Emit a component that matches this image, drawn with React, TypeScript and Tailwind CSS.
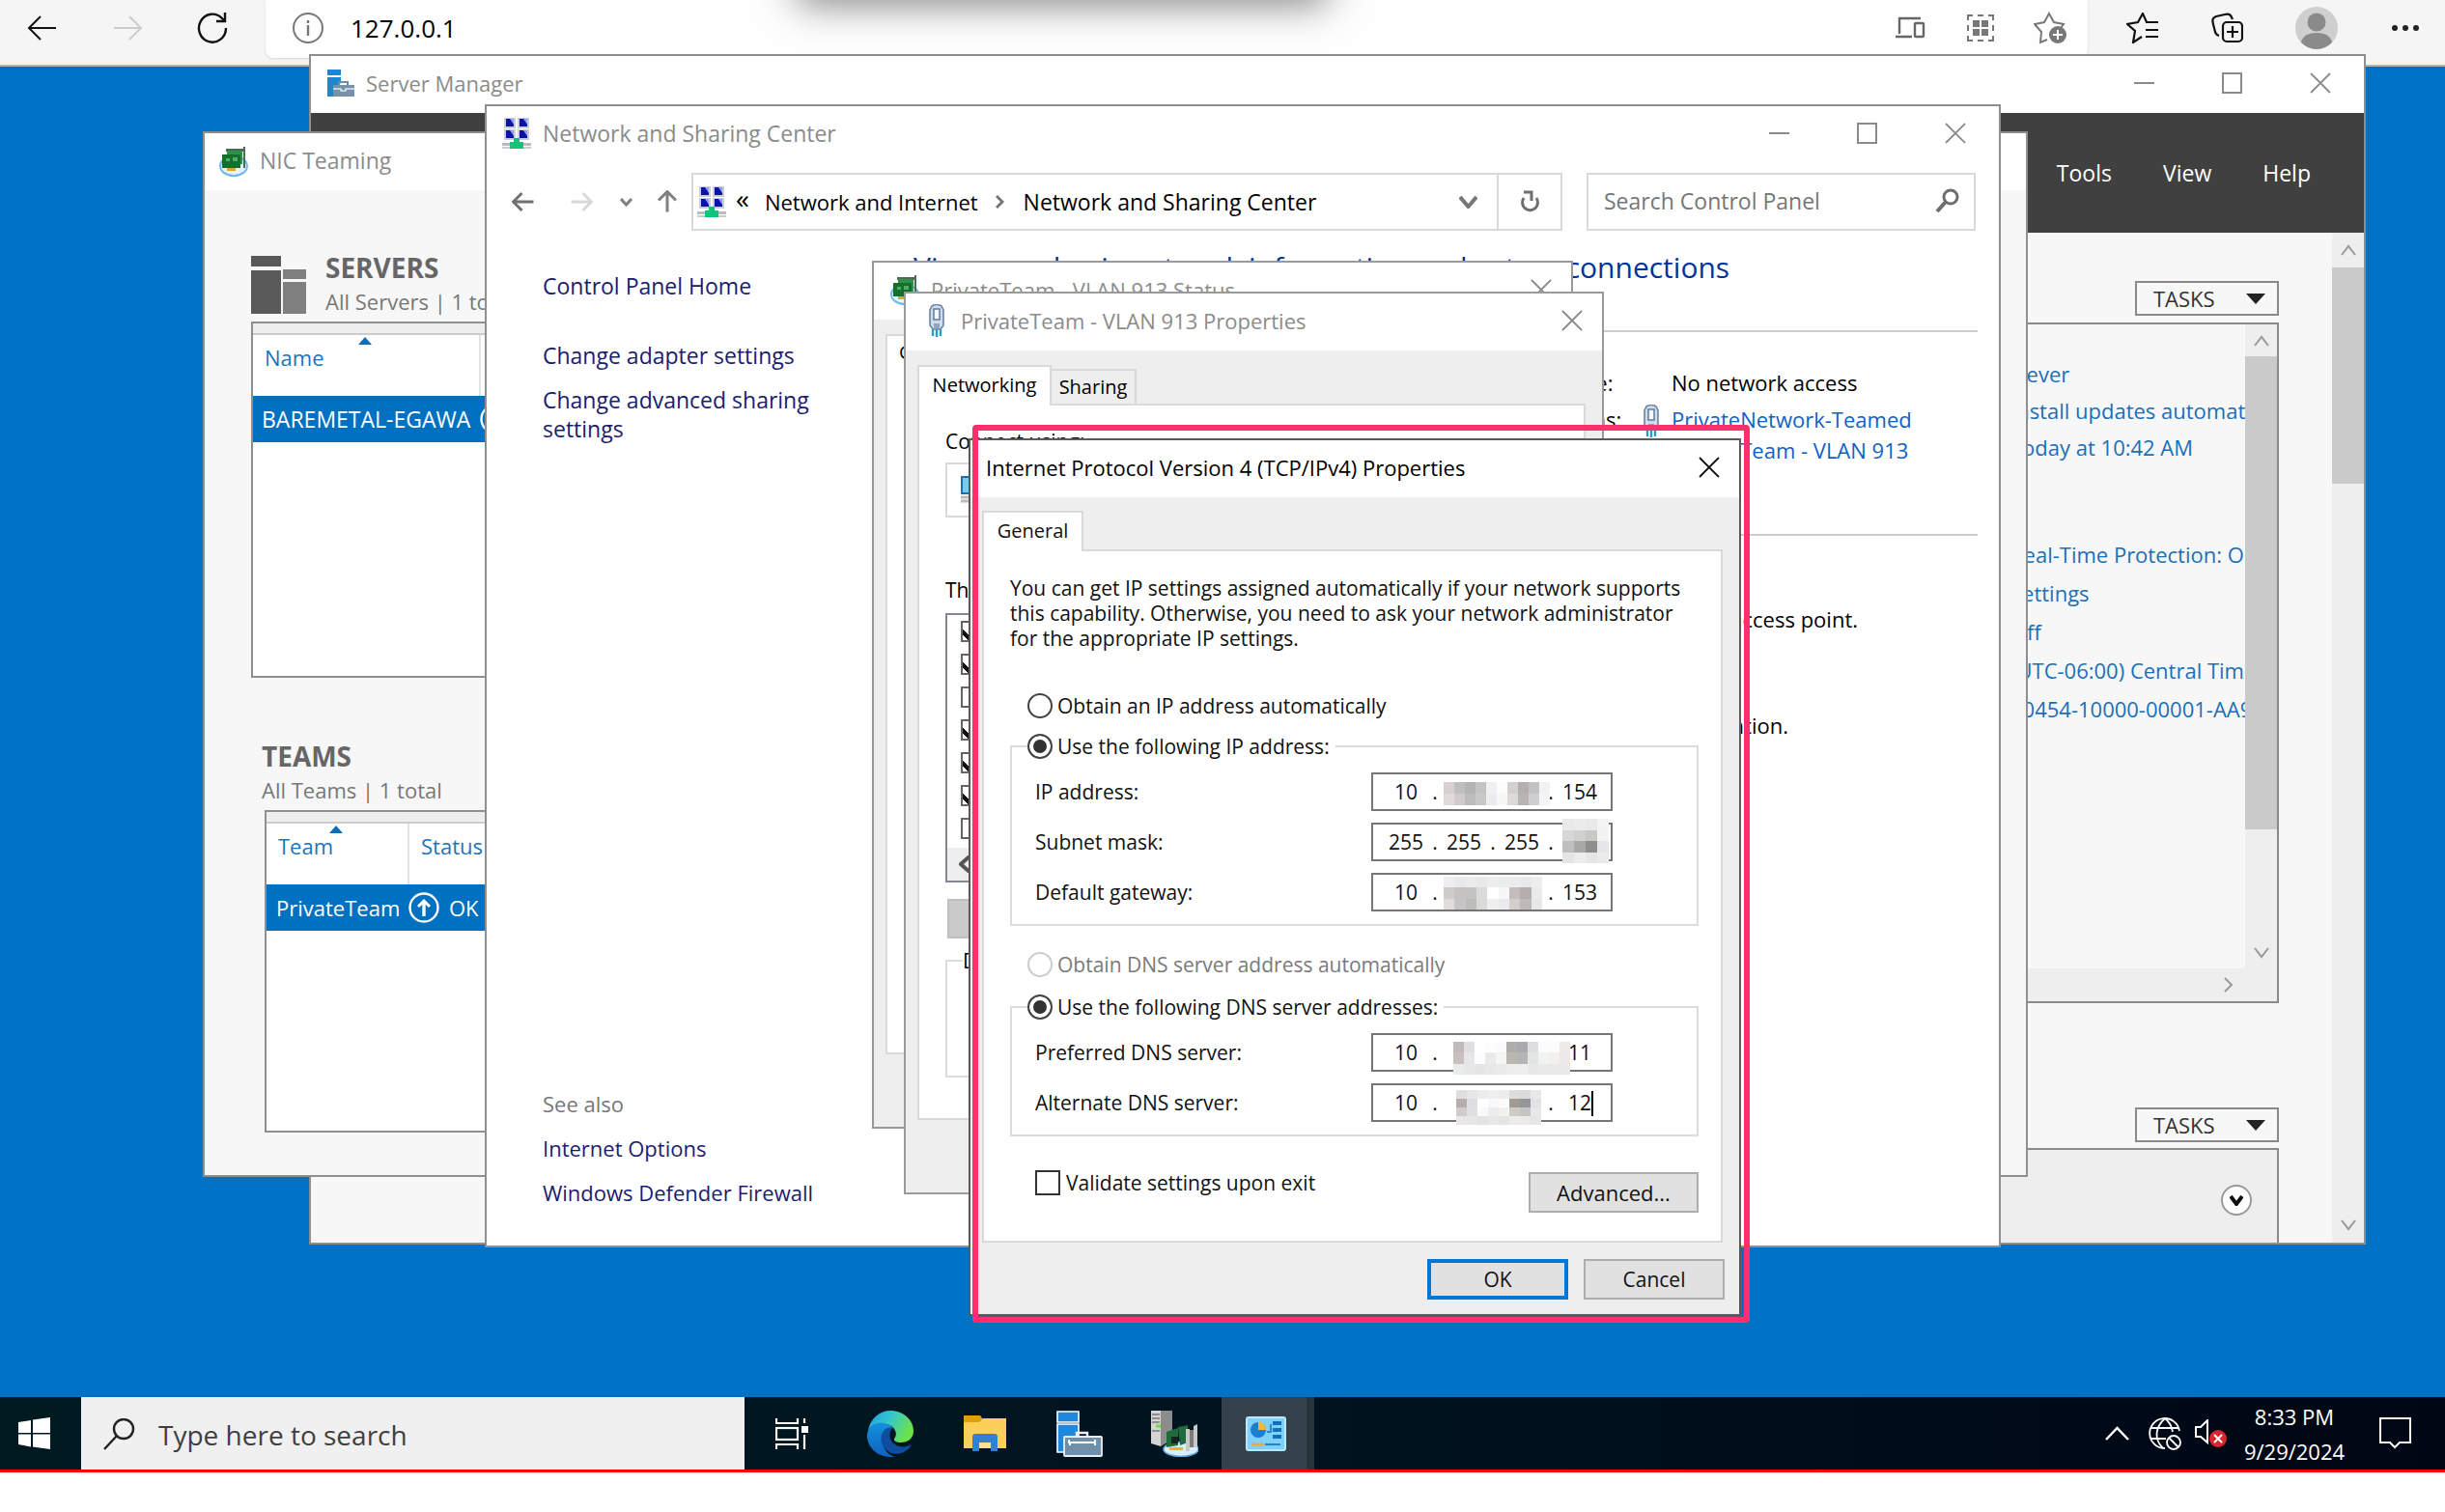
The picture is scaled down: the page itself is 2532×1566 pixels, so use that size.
import React from "react";

const sans = "font-['Open_Sans','Noto_Sans',sans-serif]";

/* ---------- icons ---------- */

function Arrow({ dir, size, stroke, color }: { dir: "left" | "right" | "up"; size: number; stroke: number; color: string }) {
  const d = {
    left: "M30 16H3M14 4L2 16l12 12",
    right: "M2 16h27M18 4l12 12-12 12",
    up: "M16 30V3M4 14L16 2l12 12",
  }[dir];
  return (
    <svg width={size} height={size} viewBox="0 0 32 32" fill="none" stroke={color} strokeWidth={stroke}>
      <path d={d} />
    </svg>
  );
}

function Chevron({ dir, w, h, stroke = 2, color = "#999" }: { dir: "up" | "down" | "left" | "right"; w: number; h: number; stroke?: number; color?: string }) {
  const d = {
    up: `M1 ${h - 1}L${w / 2} 2L${w - 1} ${h - 1}`,
    down: `M1 1L${w / 2} ${h - 2}L${w - 1} 1`,
    left: `M${w - 1} 1L2 ${h / 2}L${w - 1} ${h - 1}`,
    right: `M1 1L${w - 2} ${h / 2}L1 ${h - 1}`,
  }[dir];
  return (
    <svg width={w} height={h} viewBox={`0 0 ${w} ${h}`} fill="none" stroke={color} strokeWidth={stroke}>
      <path d={d} />
    </svg>
  );
}

function Cross({ color }: { color: string }) {
  return (
    <svg width="22" height="22" viewBox="0 0 22 22" stroke={color} strokeWidth="1.8">
      <path d="M1 1l20 20M21 1L1 21" />
    </svg>
  );
}

function NetworkIcon() {
  const screen = (x: number, y: number) => (
    <g key={`${x}-${y}`}>
      <rect x={x} y={y} width="12" height="11" fill="#c9cdd6" />
      <rect x={x + 2} y={y + 1} width="8" height="8" fill="#0c12a8" />
      <path d={`M${x + 6} ${y + 1}h4v6z`} fill="#8fa0ee" />
    </g>
  );
  return (
    <svg width="30" height="34" viewBox="0 0 30 34" className="shrink-0">
      {screen(2, 1)}
      {screen(16, 1)}
      {screen(2, 13)}
      {screen(16, 13)}
      <rect y="27" width="30" height="3" fill="#b8bcc0" />
      <rect y="31" width="30" height="2" fill="#c9ccd0" />
      <path d="M12 22h6v4h4v7H8v-7h4z" fill="#12c47a" />
    </svg>
  );
}

function NicIcon() {
  return (
    <svg width="32" height="32" viewBox="0 0 32 32" className="shrink-0">
      <ellipse cx="16" cy="21" rx="14" ry="10" fill="#e4f3fd" stroke="#6db9ea" strokeWidth="2" />
      <path d="M8 3h20v3H8zM26 1h2v22h-2z" fill="#4c6a58" />
      <path d="M9 5h16v14H9z" fill="#2d9147" />
      <path d="M4 9h19v14H4z" fill="#12702c" />
      <path d="M8 13h4v3H8zM15 12h5v4h-5z" fill="#4fae61" />
      <path d="M9 23h9v3H9z" fill="#e0a91c" />
    </svg>
  );
}

function PlugIcon() {
  return (
    <svg width="18" height="34" viewBox="0 0 18 34" className="shrink-0">
      <path d="M4 2q5-3 10 0l2 4v16l-3 4H5l-3-4V6z" fill="#cfdcec" stroke="#6c84a4" strokeWidth="1.6" />
      <rect x="6" y="5" width="6" height="11" fill="#f3f8fd" stroke="#5a7496" strokeWidth="1.4" />
      <path d="M6 20h6v5H6z" fill="#8ea6c2" />
      <path d="M5 26v7M9 26v8M13 26v7" stroke="#2b9cc4" strokeWidth="2.4" />
    </svg>
  );
}

function ServerManagerIcon() {
  return (
    <svg width="29" height="29" viewBox="0 0 29 29" className="shrink-0">
      <path d="M1 0h14v6H1zM1 8h14v6l-7 5v9H1z" fill="#1d86d2" />
      <path d="M13 16v-3h9v3" fill="none" stroke="#6f8ba3" strokeWidth="2" />
      <path d="M7 16h22v12H7z" fill="#7592aa" />
      <path d="M7 20h8v2h5v-2h9" fill="none" stroke="#dfe8ef" strokeWidth="1.4" />
    </svg>
  );
}

function UpCircle() {
  return (
    <svg width="32" height="32" viewBox="0 0 32 32" fill="none" stroke="#fff" className="shrink-0">
      <circle cx="16" cy="16" r="14.5" strokeWidth="2.4" />
      <path d="M16 25V9" strokeWidth="3.4" />
      <path d="M10 15l6-6 6 6" strokeWidth="3" />
    </svg>
  );
}

/* ---------- window pieces ---------- */

function WindowButtons({ only = false, color = "#8b8b8b" }: { only?: boolean; color?: string }) {
  return (
    <div className="ml-auto flex h-full">
      {!only && (
        <>
          <button aria-label="Minimize" className="flex w-[91px] items-center justify-center">
            <svg width="21" height="22" stroke={color} strokeWidth="2"><path d="M0 11h21" /></svg>
          </button>
          <button aria-label="Maximize" className="flex w-[91px] items-center justify-center">
            <svg width="21" height="22" fill="none" stroke={color} strokeWidth="2"><rect x="1" y="1" width="19" height="20" /></svg>
          </button>
        </>
      )}
      <button aria-label="Close" className={only ? "flex w-[62px] items-center justify-center" : "flex w-[91px] items-center justify-center"}>
        <Cross color={color} />
      </button>
    </div>
  );
}

function TasksButton({ className }: { className: string }) {
  return (
    <button className={`flex h-9 w-[149px] shrink-0 items-center self-end border-2 border-[#8a8a8a] pr-3 pl-[17px] text-[22px] leading-8 text-[#333] ${className}`}>
      TASKS
      <svg width="20" height="11" viewBox="0 0 20 11" className="ml-auto"><path d="M0 0h20L10 11z" fill="#222" /></svg>
    </button>
  );
}

function ServerManager() {
  const first = ["Never", "Install updates automatically", "Today at 10:42 AM"];
  const second = ["Real-Time Protection: On", "Settings", "Off", "(UTC-06:00) Central Time", "00454-10000-00001-AA989"];
  const link = "block overflow-hidden text-[22px] leading-[30px] whitespace-nowrap text-[#1b6fb8]";
  return (
    <section aria-label="Server Manager" className="absolute top-[56px] left-[320px] flex h-[1233px] w-[2130px] flex-col border-2 border-[#8f8f8f] bg-[#f7f7f7]">
      <div className="flex h-[59px] shrink-0 items-center gap-3 bg-white pb-[3px] pl-4 text-[22px] text-[#8b8b8b]">
        <ServerManagerIcon />
        <span>Server Manager</span>
        <WindowButtons />
      </div>
      <nav className="flex h-[124px] shrink-0 items-center justify-end gap-[53px] bg-[#404040] pr-[55px] text-[23px] text-white">
        <button>Tools</button>
        <button>View</button>
        <button>Help</button>
      </nav>
      <div className="flex min-h-0 flex-1">
        <div className="flex min-w-0 flex-1 flex-col pr-[55px] pl-[200px]">
          <TasksButton className="mt-[50px]" />
          <div className="mt-[7px] flex h-[705px] shrink-0 flex-col border-2 border-[#8a8a8a]">
            <div className="flex min-h-0 flex-1">
              <div className="ml-auto w-[243px] pt-9">
                <div className="flex flex-col gap-2">
                  {first.map((t) => <a key={t} href="#" className={link}>{t}</a>)}
                </div>
                <div className="mt-[81px] flex flex-col gap-[10px]">
                  {second.map((t) => <a key={t} href="#" className={link}>{t}</a>)}
                </div>
              </div>
              <div className="flex w-[33px] flex-col items-center bg-[#eee]">
                <div className="flex h-[33px] items-center"><Chevron dir="up" w={16} h={12} /></div>
                <div className="h-[490px] w-full bg-[#cacaca]" />
                <div className="mt-auto flex h-[33px] items-center"><Chevron dir="down" w={16} h={12} /></div>
              </div>
            </div>
            <div className="flex h-[34px] items-center justify-end bg-[#eee] pr-[45px]"><Chevron dir="right" w={10} h={16} /></div>
          </div>
          <TasksButton className="mt-[108px]" />
          <div className="mt-[6px] flex flex-1 items-center justify-end border-2 border-b-0 border-[#8a8a8a] bg-[#eee] pt-2 pr-[26px]">
            <button aria-label="Expand" className="flex h-8 w-8 items-center justify-center rounded-full border-2 border-[#999] bg-white">
              <Chevron dir="down" w={14} h={11} stroke={4} color="#111" />
            </button>
          </div>
        </div>
        <div className="flex w-[33px] shrink-0 flex-col items-center bg-[#eee]">
          <div className="flex h-9 items-center"><Chevron dir="up" w={16} h={12} /></div>
          <div className="h-[224px] w-full bg-[#cacaca]" />
          <div className="mt-auto flex h-9 items-center"><Chevron dir="down" w={16} h={12} /></div>
        </div>
      </div>
    </section>
  );
}

function SortMark({ className }: { className: string }) {
  return <svg width="14" height="8" viewBox="0 0 14 8" className={`absolute top-[2px] ${className}`}><path d="M0 8L7 0l7 8z" fill="#0f6cb6" /></svg>;
}

function NicTeaming() {
  const th = "relative h-[63px] border-r-2 border-[#e2e2e2] pb-4 text-left align-middle text-[22px] font-normal text-[#1b75bc]";
  return (
    <section aria-label="NIC Teaming" className="absolute top-[136px] left-[210px] flex h-[1083px] w-[1890px] flex-col border-2 border-[#8f8f8f] bg-[#f7f7f7]">
      <div className="flex h-[59px] shrink-0 items-center gap-[11px] bg-white pb-[2px] pl-[14px] text-[23px] text-[#8b8b8b]">
        <NicIcon />
        <span>NIC Teaming</span>
      </div>
      <div className="flex flex-col pl-12">
        <div className="mt-16 flex h-[72px] gap-5">
          <svg width="57" height="60" viewBox="0 0 57 60" className="mt-1">
            <path d="M0 0h31v11H0zM0 15h31v45H0z" fill="#595959" />
            <path d="M33 14h24v10H33zM33 27h24v33H33z" fill="#808080" />
          </svg>
          <div>
            <h2 className="text-[28px] leading-8 font-bold text-[#666]">SERVERS</h2>
            <p className="mt-1 text-[22px] leading-[30px] text-[#777]">All Servers | 1 total</p>
          </div>
        </div>
        <div className="h-[369px] w-[900px] border-2 border-[#8f8f8f] bg-white">
          <div className="h-3 border-b-2 border-[#ccc] bg-[#eee]" />
          <table className="w-full table-fixed border-collapse">
            <thead>
              <tr>
                <th className={`${th} w-[235px] pl-3`}>
                  <SortMark className="left-[109px]" />
                  Name
                </th>
                <th className={`${th} pl-3`}>Status</th>
              </tr>
            </thead>
            <tbody>
              <tr className="h-12 bg-[#0070c0] text-[23px] text-white">
                <td className="pl-[9px] whitespace-nowrap">BAREMETAL-EGAWA</td>
                <td><UpCircle /></td>
              </tr>
            </tbody>
          </table>
        </div>
        <h2 className="mt-[65px] pl-[11px] text-[28px] leading-8 font-bold text-[#666]">TEAMS</h2>
        <p className="mt-1 pl-[11px] text-[22px] leading-[30px] text-[#777]">All Teams | 1 total</p>
        <div className="mt-[6px] ml-[14px] h-[334px] w-[900px] border-2 border-[#8f8f8f] bg-white">
          <div className="h-3 border-b-2 border-[#ccc] bg-[#eee]" />
          <table className="w-full table-fixed border-collapse">
            <thead>
              <tr>
                <th className={`${th} w-[147px] pl-3`}>
                  <SortMark className="left-[65px]" />
                  Team
                </th>
                <th className={`${th} pl-3`}>Status</th>
              </tr>
            </thead>
            <tbody>
              <tr className="h-12 bg-[#0070c0] text-[22px] text-white">
                <td className="pl-[10px] whitespace-nowrap">PrivateTeam</td>
                <td>
                  <div className="flex items-center gap-[10px]"><UpCircle />OK</div>
                </td>
              </tr>
            </tbody>
          </table>
        </div>
      </div>
    </section>
  );
}

function NetworkCenter() {
  const side = "block leading-[30px] text-[#1c1c6e]";
  return (
    <section aria-label="Network and Sharing Center" className="absolute top-[108px] left-[502px] flex h-[1184px] w-[1570px] flex-col border-2 border-[#8f8f8f] bg-white text-[22px]">
      <div className="flex h-[59px] shrink-0 items-center gap-3 pb-[3px] pl-4 text-[23px] text-[#8b8b8b]">
        <NetworkIcon />
        <span>Network and Sharing Center</span>
        <WindowButtons />
      </div>
      <div className="mt-[10px] flex h-[60px] shrink-0 items-center pr-6 pl-[26px]">
        <button aria-label="Back"><Arrow dir="left" size={24} stroke={4} color="#707070" /></button>
        <button aria-label="Forward" className="ml-9"><Arrow dir="right" size={24} stroke={4} color="#d8d8d8" /></button>
        <button aria-label="Recent locations" className="ml-7"><Chevron dir="down" w={13} h={9} stroke={3} color="#808080" /></button>
        <button aria-label="Up" className="ml-6"><Arrow dir="up" size={24} stroke={4} color="#808080" /></button>
        <div className="ml-[13px] flex h-full flex-1 items-center border-2 border-[#d9d9d9] pl-1">
          <NetworkIcon />
          <span className="-mt-2 ml-[10px] text-[28px] leading-8">«</span>
          <button className="ml-4">Network and Internet</button>
          <span className="ml-[18px]"><Chevron dir="right" w={9} h={14} stroke={3} color="#777" /></span>
          <button className="ml-[20px] text-[23px]">Network and Sharing Center</button>
          <button aria-label="Previous locations" className="mr-5 ml-auto"><Chevron dir="down" w={19} h={13} stroke={4} color="#777" /></button>
          <button aria-label="Refresh" className="flex h-full w-[66px] items-center justify-center border-l-2 border-[#d9d9d9]">
            <svg width="22" height="24" viewBox="0 0 22 24" fill="none" stroke="#6e6e6e" strokeWidth="3">
              <path d="M18 8a8 8 0 1 1-13 0" />
              <path d="M5 2h8v9" />
            </svg>
          </button>
        </div>
        <div className="ml-[25px] flex h-full w-[403px] items-center border-2 border-[#d9d9d9] pr-[14px] pb-[2px] pl-4">
          <input aria-label="Search Control Panel" placeholder="Search Control Panel" className="min-w-0 flex-1 text-[23px] outline-none placeholder:text-[#767676]" />
          <svg width="26" height="26" viewBox="0 0 26 26" fill="none" stroke="#6e6e6e" strokeWidth="3">
            <circle cx="16" cy="9" r="7" />
            <path d="M11 14L2 24" strokeWidth="4" />
          </svg>
        </div>
      </div>
      <div className="flex min-h-0 flex-1">
        <nav className="flex w-[442px] shrink-0 flex-col pt-[42px] pb-10 pl-[58px]">
          <div className="text-[23px]">
            <a href="#" className={side}>Control Panel Home</a>
            <a href="#" className={`${side} mt-[42px]`}>Change adapter settings</a>
            <a href="#" className={`${side} mt-4`}>Change advanced sharing<br />settings</a>
          </div>
          <p className="mt-auto leading-[30px] text-[#777]">See also</p>
          <a href="#" className={`${side} mt-4`}>Internet Options</a>
          <a href="#" className={`${side} mt-4`}>Windows Defender Firewall</a>
        </nav>
        <div className="flex min-w-0 flex-1 flex-col pr-[22px] text-black">
          <h1 className="mt-[20px] text-[30px] leading-9 whitespace-nowrap text-[#003399]">View your basic network information and set up connections</h1>
          <hr className="mt-[47px] border-t-2 border-[#ccc]" />
          <dl className="mt-[37px] ml-[600px] grid grid-cols-[155px_1fr] leading-[30px] whitespace-nowrap">
            <dt>Access type:</dt>
            <dd className="pl-[30px]">No network access</dd>
            <dt className="mt-2">Connections:</dt>
            <dd className="mt-2 flex">
              <span className="w-[30px]"><PlugIcon /></span>
              <span className="flex flex-col text-[#0f62c4]">
                <a href="#" className="leading-[30px]">PrivateNetwork-Teamed</a>
                <a href="#" className="mt-[2px] leading-[30px]">PrivateTeam - VLAN 913</a>
              </span>
            </dd>
          </dl>
          <hr className="mt-[72px] border-t-2 border-[#ccc]" />
          <p className="mt-[71px] w-[978px] text-right leading-[30px] whitespace-nowrap">Set up a broadband, dial-up, or VPN connection; or set up a router or access point.</p>
          <p className="mt-20 w-[906px] text-right leading-[30px] whitespace-nowrap">Diagnose and repair network problems, or get troubleshooting information.</p>
        </div>
      </div>
    </section>
  );
}

function StatusWindow() {
  return (
    <section aria-label="PrivateTeam - VLAN 913 Status" className="absolute top-[270px] left-[903px] flex h-[899px] w-[726px] flex-col border-2 border-[#9a9a9a] bg-[#eee] text-[22px]">
      <div className="flex h-[59px] shrink-0 items-center gap-[11px] bg-white pb-[3px] pl-4 text-[#8b8b8b]">
        <NicIcon />
        <span>PrivateTeam - VLAN 913 Status</span>
        <WindowButtons only />
      </div>
      <div className="mt-[15px] mr-4 ml-3 h-[746px] border-2 border-[#d9d9d9] bg-white pt-1 pl-3 text-[20px] leading-[26px]">General</div>
    </section>
  );
}

function PropertiesWindow() {
  const items = [
    { name: "Client for Microsoft Networks", on: true },
    { name: "File and Printer Sharing for Microsoft Networks", on: true },
    { name: "Multiplexor Protocol", on: false },
    { name: "QoS Packet Scheduler", on: true },
    { name: "Internet Protocol Version 4", on: true },
    { name: "LLDP Protocol Driver", on: true },
    { name: "Internet Protocol Version 6", on: false },
  ];
  return (
    <section aria-label="PrivateTeam - VLAN 913 Properties" className="absolute top-[302px] left-[936px] flex h-[935px] w-[725px] flex-col border-2 border-[#9a9a9a] bg-[#eee] text-[21px] leading-[26px]">
      <div className="flex h-[59px] shrink-0 items-center gap-4 bg-white pb-[3px] pl-[23px] text-[22px] text-[#8b8b8b]">
        <PlugIcon />
        <span>PrivateTeam - VLAN 913 Properties</span>
        <WindowButtons only />
      </div>
      <div className="flex flex-1 flex-col pt-[13px] pr-[17px] pb-[75px] pl-3">
        <div role="tablist" className="flex h-[42px] items-end">
          <button role="tab" aria-selected="true" className="relative z-10 -mb-[2px] h-[42px] w-[139px] border-2 border-b-0 border-[#d9d9d9] bg-white pb-[2px] text-[20px]">Networking</button>
          <button role="tab" aria-selected="false" className="h-9 w-[88px] border-2 border-b-0 border-l-0 border-[#d9d9d9] text-[20px]">Sharing</button>
        </div>
        <div className="flex-1 border-2 border-[#d9d9d9] bg-white px-[27px] pt-6">
          <p>Connect using:</p>
          <div className="mt-[9px] flex h-[57px] items-center border-2 border-[#d9d9d9] pl-[14px]">
            <svg width="32" height="30" viewBox="0 0 32 30">
              <rect x="1" y="1" width="30" height="17" fill="#7cc8f4" stroke="#1f6fa8" strokeWidth="2" />
              <path d="M0 22h10M0 26h10" stroke="#bbb" strokeWidth="3" />
              <path d="M10 20h12v8H10z" fill="#3faa3a" />
            </svg>
          </div>
          <p className="mt-[62px]">This connection uses the following items:</p>
          <div className="mt-[11px] flex h-[279px] flex-col border-2 border-[#828790]">
            <div className="flex flex-col gap-3 pt-[6px] pl-[14px]">
              {items.map((it) => (
                <input
                  key={it.name}
                  type="checkbox"
                  aria-label={it.name}
                  defaultChecked={it.on}
                  className="h-[22px] w-[22px] appearance-none border-2 border-[#666] bg-white checked:bg-[linear-gradient(45deg,transparent_4px,#111_4px,#111_8px,transparent_8px)]"
                />
              ))}
            </div>
            <div className="mt-auto flex h-[34px] items-center bg-[#eee] pl-3"><Chevron dir="left" w={12} h={18} stroke={4} color="#555" /></div>
          </div>
          <button aria-label="Install" className="mt-[17px] ml-[2px] block h-[41px] w-[170px] border-2 border-[#bfbfbf] bg-[#cacaca]" />
          <fieldset className="mt-[10px] h-[134px] border-2 border-[#dcdcdc] px-4">
            <legend>Description</legend>
          </fieldset>
        </div>
      </div>
    </section>
  );
}

function Mosaic({ className, cols, cells }: { className: string; cols: string; cells: string[] }) {
  return (
    <div aria-hidden="true" className={`absolute grid ${cols} ${className}`}>
      {cells.map((c, i) => <i key={i} style={{ backgroundColor: c }} />)}
    </div>
  );
}

function IpField({ id, label, octets, caret, children }: { id: string; label: string; octets: string[]; caret?: boolean; children?: React.ReactNode }) {
  return (
    <div className="flex h-10 items-center justify-between">
      <label htmlFor={id}>{label}</label>
      <div className="relative flex h-10 w-[250px] items-center border-2 border-[#757575] bg-white pl-[9px]">
        {octets.map((o, i) => (
          <React.Fragment key={i}>
            {i > 0 && <span className="w-[10px] text-center">.</span>}
            <input id={i === 0 ? id : undefined} aria-label={`${label} part ${i + 1}`} defaultValue={o} className="h-full w-[50px] text-center outline-none" />
          </React.Fragment>
        ))}
        {caret && <span className="absolute top-[6px] right-[18px] h-[26px] w-[2px] bg-black" />}
        {children}
      </div>
    </div>
  );
}

const radioClass =
  "h-[26px] w-[26px] shrink-0 appearance-none rounded-full border-2 border-[#444] bg-white checked:bg-[#333] checked:shadow-[inset_0_0_0_4px_#fff] disabled:border-[#ccc]";
const group = "flex flex-col border-2 border-[#dcdcdc] pr-[87px] pb-[13px] pl-4";

function Tcpv4Dialog() {
  return (
    <section role="dialog" aria-label="Internet Protocol Version 4 (TCP/IPv4) Properties" className="absolute top-[454px] left-[1003px] flex h-[909px] w-[800px] flex-col border-2 border-[#5a5a5a] bg-[#eee] text-[21px] leading-[26px] text-[#111]">
      <div className="flex h-[59px] shrink-0 items-center bg-white pb-[3px] pl-4 text-[22px] text-black">
        <span>Internet Protocol Version 4 (TCP/IPv4) Properties</span>
        <WindowButtons only color="#111" />
      </div>
      <div className="flex flex-1 flex-col pt-[14px] pr-[17px] pl-3">
        <button role="tab" aria-selected="true" className="relative z-10 -mb-[2px] h-[42px] w-[105px] shrink-0 border-2 border-b-0 border-[#d9d9d9] bg-white pb-[2px] text-[20px]">General</button>
        <div className="flex-1 border-2 border-[#d9d9d9] bg-white pt-[25px] pr-[23px] pl-[27px]">
          <p>
            You can get IP settings assigned automatically if your network supports
            <br />
            this capability. Otherwise, you need to ask your network administrator
            <br />
            for the appropriate IP settings.
          </p>
          <label className="mt-11 ml-[18px] flex items-center gap-[5px]">
            <input type="radio" name="ip" className={radioClass} />
            Obtain an IP address automatically
          </label>
          <fieldset className={`mt-4 ${group}`}>
            <legend>
              <label className="flex items-center gap-[5px] pr-[6px]">
                <input type="radio" name="ip" defaultChecked className={radioClass} />
                Use the following IP address:
              </label>
            </legend>
            <div className="mt-[14px] flex flex-col gap-3 pl-2">
              <IpField id="ip-address" label="IP address:" octets={["10", "", "", "154"]}>
                <Mosaic
                  className="top-2 left-[73px] h-6 w-[110px]"
                  cols="grid-cols-10"
                  cells={["#d6d0ce", "#c0bfbf", "#b5b4b4", "#c3c3c4", "#f0f0f2", "#fcfcfc", "#d2cfcd", "#b4b0b0", "#c2c2c4", "#f2f2f2", "#e0dada", "#cfcccb", "#bdbcbc", "#c9c8c8", "#ececee", "#f7f7f7", "#dcdad8", "#b9b3b1", "#cfcfd0", "#f4f4f4"]}
                />
              </IpField>
              <IpField id="mask" label="Subnet mask:" octets={["255", "255", "255", ""]}>
                <Mosaic
                  className="-top-[6px] left-[196px] h-[46px] w-12"
                  cols="grid-cols-4"
                  cells={["#e9e9e9", "#ebebeb", "#e9e9e9", "#f3f3f3", "#d8d6d6", "#d0d0cf", "#c9c8c5", "#f2f2f2", "#c0bfbf", "#a9a8a8", "#8f8e8e", "#e4e6e8", "#e5e5e5", "#ededed", "#e6e6e6", "#ebebeb"]}
                />
              </IpField>
              <IpField id="gateway" label="Default gateway:" octets={["10", "", "", "153"]}>
                <Mosaic
                  className="top-[2px] left-[73px] h-[34px] w-[102px]"
                  cols="grid-cols-9"
                  cells={["#eceeef", "#e8e9ea", "#ebecec", "#e9e9ea", "#eeeeee", "#ebecec", "#ececee", "#e8e9ea", "#edeeee", "#cfcbca", "#c5c4c3", "#c4c4c1", "#dcdbdc", "#fff", "#f7f7f7", "#c4bcba", "#b4aeae", "#e8eaec", "#dfdcda", "#c6c6c6", "#bcbcb9", "#dadada", "#f0eff0", "#ebeaec", "#d2cec9", "#bfbaba", "#e5e7e9"]}
                />
              </IpField>
            </div>
          </fieldset>
          <label className="mt-[27px] ml-[18px] flex items-center gap-[5px] text-[#7a7a7a]">
            <input type="radio" name="dns" disabled className={radioClass} />
            Obtain DNS server address automatically
          </label>
          <fieldset className={`mt-[18px] ${group}`}>
            <legend>
              <label className="flex items-center gap-[5px] pr-[6px]">
                <input type="radio" name="dns" defaultChecked className={radioClass} />
                Use the following DNS server addresses:
              </label>
            </legend>
            <div className="mt-[14px] flex flex-col gap-3 pl-2">
              <IpField id="dns-1" label="Preferred DNS server:" octets={["10", "", "", "11"]}>
                <Mosaic
                  className="top-[7px] left-[83px] h-[34px] w-[121px]"
                  cols="grid-cols-11"
                  cells={["#c2b9b9", "#dfdfe2", "#fff", "#fdfdfd", "#fbfbfd", "#b0aeac", "#aaa9ad", "#dcdfe2", "#fbfbfb", "#fcfcfc", "#eeeae9", "#c9c0bf", "#e6e6e8", "#fdfdfd", "#ebe9e9", "#f5f5f5", "#b9b7b2", "#b5b5b5", "#e3e5e5", "#f3f2f2", "#f1f0ef", "#ede9e8", "#eaecec", "#e6e8e8", "#e5e5e5", "#e8e8e8", "#e9ebeb", "#ededeb", "#eeeeee", "#e6e8e8", "#e9e9e9", "#e8e8e8", "#e8eaea"]}
                />
              </IpField>
              <IpField id="dns-2" label="Alternate DNS server:" octets={["10", "", "", "12"]} caret>
                <Mosaic
                  className="top-[5px] left-[86px] h-9 w-[88px]"
                  cols="grid-cols-8"
                  cells={["#dfdfdf", "#e6e6e6", "#ececec", "#efefef", "#ececec", "#dcdcdc", "#d9dada", "#e6e8ea", "#b7aeab", "#dedee2", "#fff", "#f9f9fb", "#fefcfa", "#a29b94", "#95959a", "#e2e2e4", "#d0ccc9", "#dfdfe0", "#fafafa", "#ededed", "#f1f1f1", "#cecbc6", "#c4c4c4", "#e8e8ea", "#e8e8ea", "#e6e6e6", "#e3e3e3", "#e8e8e8", "#e5e5e5", "#ececec", "#eaeaea", "#e5e7e7"]}
                />
              </IpField>
            </div>
          </fieldset>
          <div className="mt-[35px] ml-[26px] flex items-start justify-between">
            <label className="flex items-center gap-[6px]">
              <input type="checkbox" className="h-[26px] w-[26px] appearance-none border-2 border-[#333] bg-white checked:bg-[#333]" />
              Validate settings upon exit
            </label>
            <button className="mt-[2px] h-[42px] w-44 border-2 border-[#adadad] bg-[#e1e1e1] text-[22px]">Advanced...</button>
          </div>
        </div>
      </div>
      <div className="flex shrink-0 justify-end gap-4 pt-[17px] pr-[15px] pb-[15px]">
        <button className="h-[42px] w-[146px] border-4 border-[#0078d7] bg-[#e1e1e1]">OK</button>
        <button className="h-[42px] w-[146px] border-2 border-[#adadad] bg-[#e1e1e1]">Cancel</button>
      </div>
    </section>
  );
}

/* ---------- browser bar ---------- */

function BrowserBar() {
  return (
    <header className="relative flex h-[69px] shrink-0 items-start overflow-hidden border-b-2 border-[#b5b5b5] bg-[#f5f5f5]">
      <div className="flex h-[57px] w-[275px] items-center gap-[56px] pl-7">
        <button aria-label="Back"><Arrow dir="left" size={32} stroke={2} color="#111" /></button>
        <button aria-label="Forward"><Arrow dir="right" size={32} stroke={2} color="#ccc" /></button>
        <button aria-label="Reload">
          <svg width="32" height="34" viewBox="0 0 32 34" fill="none" stroke="#111" strokeWidth="2.400">
            <path d="M30 17A14 14.500 0 1 1 26 7l3 3" />
            <path d="M29 1v9h-9" />
          </svg>
        </button>
      </div>
      <div className="flex h-[60px] flex-1 items-center rounded-b-lg bg-[#fefefe] pr-5 pb-[2px] pl-7 shadow-sm">
        <svg width="32" height="32" viewBox="0 0 32 32" fill="none" stroke="#777" strokeWidth="2">
          <circle cx="16" cy="16" r="15" />
          <path d="M16 13v11M16 8v3" strokeWidth="2.400" />
        </svg>
        <input aria-label="Address" defaultValue="127.0.0.1" className="ml-7 min-w-0 flex-1 text-[26px] leading-8 text-black outline-none" />
        <svg width="31" height="24" viewBox="0 0 31 24" fill="none" stroke="#666" strokeWidth="2.400">
          <path d="M4 18V2h22M0 21h17" />
          <rect x="20" y="7" width="9" height="14" rx="1" />
        </svg>
        <svg width="28" height="28" viewBox="0 0 28 28" fill="none" stroke="#777" strokeWidth="2" className="ml-[43px]">
          <path d="M1 6V1h5M22 1h5v5M27 22v5h-5M6 27H1v-5M11 1h6M11 27h6M1 11v6M27 11v6" />
          <path d="M6 6h7v7H6zM15 6h7v7h-7zM6 15h7v7H6zM15 15h7v7h-7z" fill="#777" stroke="none" />
        </svg>
        <svg width="36" height="34" viewBox="0 0 36 34" fill="none" stroke="#777" strokeWidth="2" className="ml-[41px]">
          <path d="M14 29l-7 3 1-11-7-8 10-2 5-9 5 9 10 2-3 4" />
          <circle cx="25" cy="24" r="9" fill="#777" stroke="none" />
          <path d="M25 19v10M20 24h10" stroke="#fff" />
        </svg>
      </div>
      <div className="flex h-[58px] w-[370px] items-center pl-10">
        <svg width="34" height="32" viewBox="0 0 34 32" fill="none" stroke="#111" strokeWidth="2.200">
          <path d="M16 25l-9 6 2-12-8-7 11-2 5-9 4 9h12M20 18h13M20 25h13" />
        </svg>
        <svg width="33" height="32" viewBox="0 0 33 32" fill="none" stroke="#111" strokeWidth="2.200" className="ml-[54px]">
          <rect x="12" y="10" width="20" height="20" rx="4" />
          <path d="M22 14v12M16 20h12M8 24c-4-1-4-4-5-8C1 9 0 6 5 4l9-2c5-1 6 0 8 5" />
        </svg>
        <svg width="44" height="44" viewBox="0 0 44 44" className="ml-[54px]">
          <circle cx="22" cy="22" r="22" fill="#cfcfcf" />
          <circle cx="22" cy="16" r="9.500" fill="#8a8a8a" />
          <path d="M6 37q2-10 16-10t16 10q-7 7-16 7t-16-7z" fill="#8a8a8a" />
        </svg>
        <svg width="28" height="6" viewBox="0 0 28 6" className="ml-[56px]" fill="#222">
          <circle cx="3" cy="3" r="3" /><circle cx="14" cy="3" r="3" /><circle cx="25" cy="3" r="3" />
        </svg>
      </div>
      <div aria-hidden="true" className="absolute -top-[33px] left-[830px] h-[31px] w-[540px] rounded-lg shadow-[0_0_40px_6px_rgba(0,0,0,0.5)]" />
    </header>
  );
}

/* ---------- taskbar ---------- */

function Taskbar() {
  const cell = "flex w-[98px] shrink-0 items-center justify-center";
  return (
    <footer className="flex h-[75px] shrink-0 bg-gradient-to-r from-[#001a22] via-[#001420] to-[#000614] text-white">
      <button aria-label="Start" className="flex w-[84px] shrink-0 items-center pl-[19px]">
        <svg width="33" height="33" viewBox="0 0 33 33" fill="#fff">
          <path d="M0 5l13-2v13H0zM15 2.500L33 0v16H15zM0 17.500h13v13L0 28zM15 17.500h18V33l-18-2.500z" />
        </svg>
      </button>
      <div className="flex w-[687px] shrink-0 items-center bg-[#f0f0f0] pt-[2px] pl-[23px]">
        <svg width="33" height="33" viewBox="0 0 33 33" fill="none" stroke="#222" strokeWidth="2.400">
          <circle cx="21" cy="11" r="10" />
          <path d="M14 18L1 32" />
        </svg>
        <input aria-label="Search" placeholder="Type here to search" className="ml-6 min-w-0 flex-1 text-[28px] outline-none placeholder:text-[#3f3f3f]" />
      </div>
      <button aria-label="Task View" className="flex w-[102px] shrink-0 items-center justify-center pr-1">
        <svg width="34" height="32" viewBox="0 0 34 32" fill="none" stroke="#fff" strokeWidth="2.200">
          <path d="M1 0v5h22V0M1 32v-5h22v5M30 0v5M30 17v15" />
          <rect x="1" y="10" width="22" height="12" />
          <path d="M27 8h7v7h-7z" fill="#fff" stroke="none" />
        </svg>
      </button>
      <button aria-label="Microsoft Edge" className={cell}>
        <svg width="48" height="48" viewBox="0 0 48 48">
          <defs>
            <linearGradient id="edge-a" x1="0" x2="1" y1="0" y2="0.400"><stop offset="0" stopColor="#1b9de2" /><stop offset="0.500" stopColor="#35c5cf" /><stop offset="1" stopColor="#6be24a" /></linearGradient>
            <linearGradient id="edge-b" x1="0" x2="0" y1="0" y2="1"><stop offset="0" stopColor="#1690dc" /><stop offset="1" stopColor="#0c62bf" /></linearGradient>
          </defs>
          <path d="M1 21C3 8 13 0 24 0c14 0 24 10 24 21 0 8-6 12-13 12-5 0-8-2-7-4 4-5 1-14-9-15C11 13 4 15 1 21z" fill="url(#edge-a)" />
          <path d="M0 24c2-9 9-12 16-11 7 0 13 5 13 11-4-6-11-4-13 3-2 9 4 19 13 21-1 0-4 0-5 0C10 48-1 37 0 24z" fill="url(#edge-b)" />
          <path d="M19 19c-6 5-6 14-1 20 8 9 20 7 27-2 1-2 0-2-1-1-7 3-16 1-19-5-3-5-1-9 1-13-3-1-5 0-7 1z" fill="#0f4d9e" />
          <path d="M26 18c-3 4-3 9 1 13 1 1 2 1 2 1-2-2-1-3 0-5 1-3 0-7-3-9z" fill="#001420" />
        </svg>
      </button>
      <button aria-label="File Explorer" className={cell}>
        <svg width="44" height="38" viewBox="0 0 44 38">
          <path d="M0 0h17l3 4v6H0z" fill="#e59c10" />
          <path d="M0 7h16l4-4h24v31H0z" fill="#fbd05a" />
          <path d="M9 22q0-3 3-3h20q3 0 3 3v15h-7v-9H16v9H9z" fill="#2f82cf" />
          <path d="M16 28h12v6H16z" fill="#fde08a" />
        </svg>
      </button>
      <button aria-label="Server Manager" className={cell}>
        <svg width="48" height="48" viewBox="0 0 48 48">
          <path d="M1 1h22v11H1zM1 14h22v29H1z" fill="#1f88dc" stroke="#fff" strokeWidth="1.600" />
          <path d="M21 27v-4h11v4" fill="none" stroke="#e8eef3" strokeWidth="2.400" />
          <rect x="8" y="27" width="39" height="20" rx="1" fill="#6f8fab" stroke="#e8eef3" strokeWidth="1.800" />
          <path d="M13 30v3h27v-3M13 35h2M39 35h2" fill="none" stroke="#fff" strokeWidth="1.800" />
        </svg>
      </button>
      <button aria-label="NIC Teaming" className={cell}>
        <svg width="50" height="48" viewBox="0 0 50 48">
          <path d="M1 0h10v37L1 34z" fill="#d4d4d4" />
          <path d="M11 0h12v30l-12 7z" fill="#8c8c8c" />
          <path d="M2 4h8M2 8h8M2 12h8M2 21h8" stroke="#777" strokeWidth="1.500" />
          <path d="M6 16h5" stroke="#6ce03c" strokeWidth="3" />
          <ellipse cx="32" cy="40" rx="18" ry="7.500" fill="#d9edfb" stroke="#5ea9e4" strokeWidth="1.500" />
          <path d="M17 22l12-4v18l-12 2zM29 17l10-2v18l-8 3z" fill="#1f6b3c" />
          <path d="M22 27h7v7h-7z" fill="#16281d" />
          <path d="M20 38h14v3H20z" fill="#e8b52a" />
          <path d="M37 19h4v23h-4zM45 16l4-2v24h-4z" fill="#c9c9c9" />
          <path d="M41 20h4v18h-4z" fill="#7d7d7d" />
        </svg>
      </button>
      <button aria-label="Network and Sharing Center" className="flex w-[96px] shrink-0 items-center justify-center border-r-8 border-[#28333c] bg-[#36414e] pl-1">
        <svg width="42" height="36" viewBox="0 0 42 36">
          <rect x="1" y="1" width="40" height="34" rx="2" fill="#7fd0fa" stroke="#b9e8fd" strokeWidth="2" />
          <circle cx="13" cy="14" r="8" fill="#1b7fd0" />
          <path d="M13 14V5a9 9 0 0 1 8 9z" fill="#f7b83a" />
          <path d="M28 7h9M28 14h9M28 21h9" stroke="#1270bd" strokeWidth="4" />
          <path d="M22 16h4V8" fill="none" stroke="#1270bd" strokeWidth="1.500" />
          <path d="M6 29h13" stroke="#f0a63c" strokeWidth="2.500" />
          <path d="M20 29h16" stroke="#2483cf" strokeWidth="2" />
        </svg>
      </button>
      <div className="ml-auto flex items-center pr-[35px]">
        <button aria-label="Show hidden icons"><Chevron dir="up" w={25} h={15} stroke={2.5} color="#fff" /></button>
        <svg width="34" height="34" viewBox="0 0 34 34" fill="none" stroke="#fff" strokeWidth="1.800" className="ml-5">
          <path d="M32 14A15.500 15.500 0 1 0 17 32" />
          <path d="M17 1c-11 10-11 22-2 31M17 1c5 4 7 8 8 14M2 11h29M2 22h16" />
          <circle cx="26" cy="26" r="7" />
          <path d="M21 21l10 10" />
        </svg>
        <svg width="34" height="30" viewBox="0 0 34 30" fill="none" stroke="#fff" strokeWidth="2" className="ml-[14px]">
          <path d="M1 8h5l7-7v23l-7-6H1z" />
          <circle cx="24" cy="20" r="9" fill="#d9262e" stroke="none" />
          <path d="M20 16l8 8M28 16l-8 8" />
        </svg>
        <div className="ml-[17px] flex w-[104px] flex-col items-center gap-[6px] text-[22px] leading-[30px] whitespace-nowrap">
          <span>8:33 PM</span>
          <span>9/29/2024</span>
        </div>
        <button aria-label="Notifications" className="ml-9">
          <svg width="33" height="33" viewBox="0 0 33 33" fill="none" stroke="#fff" strokeWidth="2">
            <path d="M1 1h31v25H21l-5 5-5-5H1z" />
          </svg>
        </button>
      </div>
    </footer>
  );
}

export default function App() {
  return (
    <div className={`relative flex h-screen min-h-[1566px] w-full flex-col overflow-hidden bg-white ${sans}`}>
      <BrowserBar />
      <main className="flex-1 bg-[#0072c6]">
        <ServerManager />
        <NicTeaming />
        <NetworkCenter />
        <StatusWindow />
        <PropertiesWindow />
        <Tcpv4Dialog />
        <div aria-hidden="true" className="pointer-events-none absolute top-[440px] left-[1007px] h-[930px] w-[805px] rounded border-[6px] border-[#ff2f6d]" />
      </main>
      <Taskbar />
      <div className="h-[3px] shrink-0 bg-[#f00]" />
      <div className="h-[41px] shrink-0" />
    </div>
  );
}
